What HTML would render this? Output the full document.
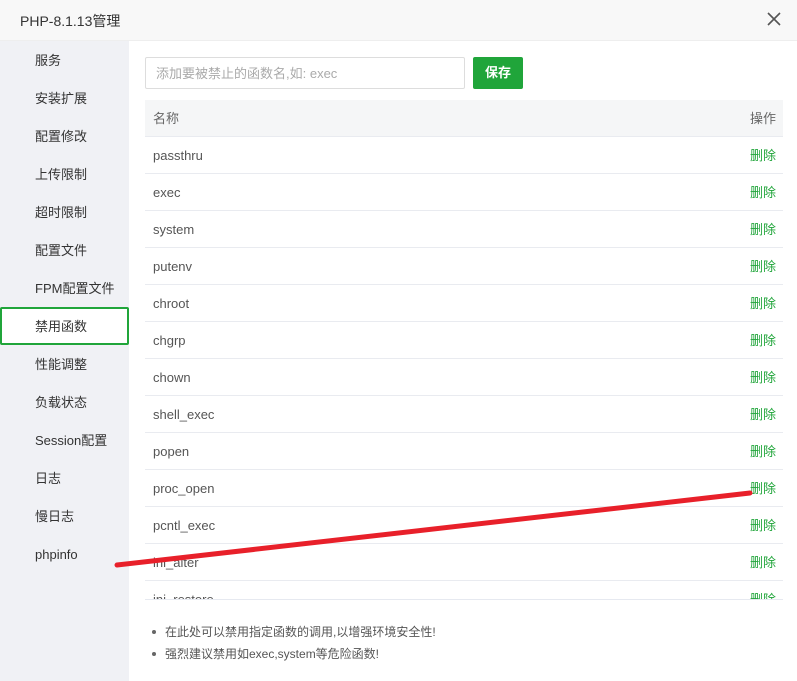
<!DOCTYPE html>
<html><head><meta charset="utf-8"><style>
*{margin:0;padding:0;box-sizing:border-box}
body{width:797px;height:681px;overflow:hidden;background:#fff;font-family:"Liberation Sans","Noto Sans CJK SC",sans-serif;font-size:13px;color:#555;position:relative}
.hd{position:absolute;left:0;top:0;width:797px;height:41px;background:#f8f8f8;border-bottom:1px solid #eee}
.hd .t{position:absolute;left:20px;top:11px;font-size:14px;color:#333}
.hd .x{position:absolute;right:16px;top:12px}
.sb{position:absolute;left:0;top:41px;width:129px;height:640px;background:#f0f1f5}
.sb div{position:absolute;left:0;width:129px;height:38px;line-height:40px;padding-left:35px;color:#333;font-size:13px}
.sb .a{background:#fff;border:2px solid #20a53a;border-radius:2px;padding-left:33px;line-height:36px}
.inp{position:absolute;left:145px;top:57px;width:320px;height:32px;border:1px solid #ddd;border-radius:2px;padding-left:10px;line-height:31px;color:#aaa}
.btn{position:absolute;left:473px;top:57px;width:50px;height:32px;background:#20a53a;color:#fff;border-radius:2px;text-align:center;line-height:32px;font-weight:bold}
.tb{position:absolute;left:145px;top:100px;width:638px;height:500px;overflow:hidden;border-bottom:1px solid #e6e9f0}
.r{height:37px;line-height:38px;border-bottom:1px solid #e9ebf0;padding:0 8px;position:relative}
.r span{position:absolute;right:7px;color:#20a53a}
.th{background:#f5f6f7;color:#666}
.th span{color:#666}
ul{position:absolute;left:150px;top:622px;list-style:none;font-size:12px;color:#555}
ul li{height:22px;line-height:20px;padding-left:15px;position:relative}
ul li:before{content:"";position:absolute;left:2px;top:8px;width:4px;height:4px;border-radius:50%;background:#666}
</style></head><body>
<div class="hd"><div class="t">PHP-8.1.13管理</div>
<svg class="x" width="14" height="14" viewBox="0 0 14 14"><path d="M1 1L13 13M13 1L1 13" stroke="#555" stroke-width="1.6"/></svg></div>
<div class="sb">
<div style="top:0">服务</div><div style="top:38px">安装扩展</div><div style="top:76px">配置修改</div><div style="top:114px">上传限制</div><div style="top:152px">超时限制</div><div style="top:190px">配置文件</div><div style="top:228px">FPM配置文件</div><div class="a" style="top:266px">禁用函数</div><div style="top:304px">性能调整</div><div style="top:342px">负载状态</div><div style="top:380px">Session配置</div><div style="top:418px">日志</div><div style="top:456px">慢日志</div><div style="top:494px">phpinfo</div>
</div>
<div class="inp">添加要被禁止的函数名,如: exec</div>
<div class="btn">保存</div>
<div class="tb">
<div class="r th">名称<span>操作</span></div>
<div class="r">passthru<span>删除</span></div>
<div class="r">exec<span>删除</span></div>
<div class="r">system<span>删除</span></div>
<div class="r">putenv<span>删除</span></div>
<div class="r">chroot<span>删除</span></div>
<div class="r">chgrp<span>删除</span></div>
<div class="r">chown<span>删除</span></div>
<div class="r">shell_exec<span>删除</span></div>
<div class="r">popen<span>删除</span></div>
<div class="r">proc_open<span>删除</span></div>
<div class="r">pcntl_exec<span>删除</span></div>
<div class="r">ini_alter<span>删除</span></div>
<div class="r">ini_restore<span>删除</span></div>
</div>
<ul><li>在此处可以禁用指定函数的调用,以增强环境安全性!</li><li>强烈建议禁用如exec,system等危险函数!</li></ul>
<svg style="position:absolute;left:0;top:0" width="797" height="681"><line x1="117" y1="565" x2="750" y2="493" stroke="#e8202a" stroke-width="5" stroke-linecap="round"/></svg>
</body></html>
